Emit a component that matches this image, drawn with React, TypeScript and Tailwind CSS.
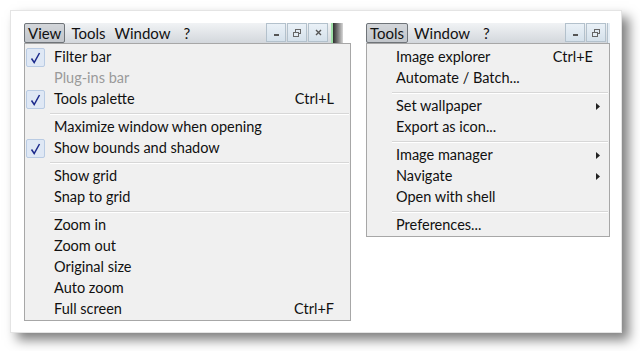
const font = { fontFamily: 'Lato, "Open Sans", sans-serif' };

type Item = {
  label?: string;
  shortcut?: string;
  checked?: boolean;
  disabled?: boolean;
  sub?: boolean;
  sep?: boolean;
};

const viewItems: Item[] = [
  { label: "Filter bar", checked: true },
  { label: "Plug-ins bar", disabled: true },
  { label: "Tools palette", checked: true, shortcut: "Ctrl+L" },
  { sep: true },
  { label: "Maximize window when opening" },
  { label: "Show bounds and shadow", checked: true },
  { sep: true },
  { label: "Show grid" },
  { label: "Snap to grid" },
  { sep: true },
  { label: "Zoom in" },
  { label: "Zoom out" },
  { label: "Original size" },
  { label: "Auto zoom" },
  { label: "Full screen", shortcut: "Ctrl+F" },
];

const toolItems: Item[] = [
  { label: "Image explorer", shortcut: "Ctrl+E" },
  { label: "Automate / Batch..." },
  { sep: true },
  { label: "Set wallpaper", sub: true },
  { label: "Export as icon..." },
  { sep: true },
  { label: "Image manager", sub: true },
  { label: "Navigate", sub: true },
  { label: "Open with shell" },
  { sep: true },
  { label: "Preferences..." },
];

const Check = () => (
  <div className="w-[19px] h-[19px] flex items-center justify-center bg-[#dfe8f5] border border-[#b9cbe3] rounded-[2px]">
    <svg width="11" height="12" viewBox="0 0 11 12">
      <path d="M1.5 6.5 L4.2 10.5 L9.5 1" fill="none" stroke="#1c2a8c" strokeWidth="1.5" />
    </svg>
  </div>
);

const WinBtn = ({ kind }: { kind: "min" | "max" | "close" }) => (
  <div className="w-[20px] h-[19px] flex items-center justify-center bg-gradient-to-b from-[#eaf1f7] to-[#d5e1eb] border border-[#b3c1cc]">
    {kind === "min" && <div className="w-[5px] h-[2px] bg-[#555] mt-[5px]" />}
    {kind === "max" && (
      <svg width="8" height="8" viewBox="0 0 8 8">
        <rect x="2.5" y="0.5" width="5" height="4" fill="none" stroke="#666" />
        <rect x="0.5" y="3.5" width="5" height="4" fill="#e3ecf3" stroke="#666" />
      </svg>
    )}
    {kind === "close" && (
      <svg width="7" height="7" viewBox="0 0 7 7">
        <path d="M1 1 L6 6 M6 1 L1 6" stroke="#555" strokeWidth="1.4" />
      </svg>
    )}
  </div>
);

const Menu = ({ items }: { items: Item[] }) => (
  <div className="bg-[#f0f0f0] border border-[#a7a7a7] pt-[3px]">
    {items.map((it, i) =>
      it.sep ? (
        <div key={i} className="h-[7px] flex flex-col justify-center ml-[25px] mr-[1px]">
          <div className="h-px bg-[#d7d7d7]" />
          <div className="h-px bg-white" />
        </div>
      ) : (
        <div key={i} className="h-[21px] flex items-center text-[14.5px] leading-none">
          <div className="w-[29px] pl-[1px] flex items-center">
            {it.checked && <Check />}
          </div>
          <span className={it.disabled ? "text-[#9a9a9a]" : "text-[#111]"}>{it.label}</span>
          <span className="flex-1" />
          {it.shortcut && <span className="text-[#111] mr-[16px]">{it.shortcut}</span>}
          {it.sub && (
            <svg width="4" height="7" viewBox="0 0 4 7" className="mr-[9px]">
              <path d="M0 0 L4 3.5 L0 7 Z" fill="#222" />
            </svg>
          )}
        </div>
      )
    )}
  </div>
);

const MenuBar = ({ first, rest }: { first: string; rest: { t: string; ml: string }[] }) => (
  <div className="flex items-center h-[20px] text-[15px] leading-none text-[#111]">
    <div className="h-[20px] px-[3px] pt-px flex items-center bg-gradient-to-b from-[#d3d6da] to-[#c2c6cb] border border-[#6f7479] rounded-[2px]">
      {first}
    </div>
    {rest.map((r) => (
      <span key={r.t} className={`${r.ml} pt-px`}>
        {r.t}
      </span>
    ))}
  </div>
);

export default function App() {
  return (
    <div className="w-[640px] h-[351px] bg-white pt-[10px] pl-[10px]" style={font}>
      <div className="w-[612px] h-[323px] bg-white border border-[#e4e4e4] shadow-[7px_7px_11px_rgba(0,0,0,0.5)] pl-[13px] pt-[12px] flex gap-[15px] items-start">
        {/* left window */}
        <div className="w-[327px] flex flex-col">
          <div className="flex h-[20px]">
            <div className="w-[307px] flex bg-gradient-to-b from-[#f1f3f5] to-[#d3d7dc]">
              <MenuBar
                first="View"
                rest={[
                  { t: "Tools", ml: "ml-[6px]" },
                  { t: "Window", ml: "ml-[9px]" },
                  { t: "?", ml: "ml-[13px]" },
                ]}
              />
              <div className="flex-1" />
              <div className="flex gap-px">
                <WinBtn kind="min" />
                <WinBtn kind="max" />
                <WinBtn kind="close" />
              </div>
              <div className="w-[3px]" />
            </div>
            <div className="w-[2px] bg-[#9fe0a8]" />
            <div className="w-[10px] bg-gradient-to-r from-[#2e2e2e] to-[#d8d8d8]" />
          </div>
          <Menu items={viewItems} />
        </div>
        {/* right window */}
        <div className="w-[244px] flex flex-col">
          <div className="flex h-[20px] bg-gradient-to-b from-[#f1f3f5] to-[#d3d7dc]">
            <MenuBar
              first="Tools"
              rest={[
                { t: "Window", ml: "ml-[6px]" },
                { t: "?", ml: "ml-[13px]" },
              ]}
            />
            <div className="flex-1" />
            <div className="flex gap-px">
              <WinBtn kind="min" />
              <WinBtn kind="max" />
              <div className="w-[3px] border-l border-[#b3c1cc] bg-[#e6eef5]" />
            </div>
          </div>
          <Menu items={toolItems} />
        </div>
      </div>
    </div>
  );
}
